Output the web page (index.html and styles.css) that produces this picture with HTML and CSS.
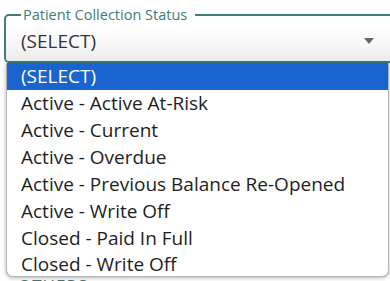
FILE: index.html
```html
<!DOCTYPE html>
<html lang="en">

<head>
  <meta charset="UTF-8">
  <meta name="viewport" content="width=device-width, initial-scale=1.0">
  <title>Patient Collection Status</title>

  <link rel="stylesheet" href="styles.css">
</head>

<body>
  <div class="page">
    <fieldset class="field">
      <legend>Patient Collection Status</legend>
      <div class="select">
        <span class="value">(SELECT)</span>
        <svg class="arrow" width="10" height="6" viewBox="0 0 10 6"><path d="M0 0h10L5 6z" fill="#666"/></svg>
      </div>
    </fieldset>

    <div class="next">OTHERS</div>

    <ul class="menu">
      <li class="active">(SELECT)</li>
      <li>Active - Active At-Risk</li>
      <li>Active - Current</li>
      <li>Active - Overdue</li>
      <li>Active - Previous Balance Re-Opened</li>
      <li>Active - Write Off</li>
      <li>Closed - Paid In Full</li>
      <li>Closed - Write Off</li>
    </ul>
  </div>
</body>

</html>
```

FILE: styles.css
```css
* {
  margin: 0;
  padding: 0;
  box-sizing: border-box;
}

html, body {
  width: 390px;
  height: 281px;
  overflow: hidden;
  background: #fff;
}

body {
  font-family: "Open Sans", "Noto Sans", sans-serif;
  color: #333;
}

ul {
  list-style: none;
}

.page {
  position: relative;
  height: 281px;
  padding: 6px 0 0 4px;
}

.field {
  width: 400px;
  height: 57px;
  border: 2px solid #3f7c7a;
  border-radius: 5px;
  padding: 0 0 0 15px;
}

.field legend {
  font-size: 14.5px;
  line-height: 18px;
  color: #3f7c7a;
  padding: 0 8px 0 2px;
  margin-left: 0;
}

.select {
  display: flex;
  align-items: center;
  height: 37px;
  margin: 0 0 0 -15px;
  padding: 0 0 0 15px;
  width: 386px;
  background: linear-gradient(#fff, #fafafa 40%, #ececec);
  border-radius: 0 0 0 4px;
}

.select .value {
  font-size: 19px;
  flex: 1;
  padding-bottom: 4px;
}

.select .arrow {
  margin-right: 18px;
  margin-top: -4px;
}

.next {
  margin: 214px 0 0 14px;
  font-size: 17px;
  line-height: 17px;
  color: #4d7775;
  letter-spacing: 1px;
}

.menu {
  position: absolute;
  top: 63px;
  left: 6px;
  width: 383px;
  height: 214px;
  overflow: hidden;
  background: #fff;
  border: 1px solid #b4b4b4;
  border-top: none;
  border-radius: 0 0 7px 7px;
  box-shadow: 0 1px 4px rgba(0, 0, 0, 0.3);
}

.menu li {
  font-size: 19px;
  line-height: 27px;
  height: 27px;
  padding-left: 14px;
  color: #1e1e1e;
  white-space: nowrap;
}

.menu li:last-child {
  height: 24px;
  line-height: 23px;
  padding-top: 1px;
}

.menu li.active {
  background: #1a64d0;
  color: #fff;
}
```
